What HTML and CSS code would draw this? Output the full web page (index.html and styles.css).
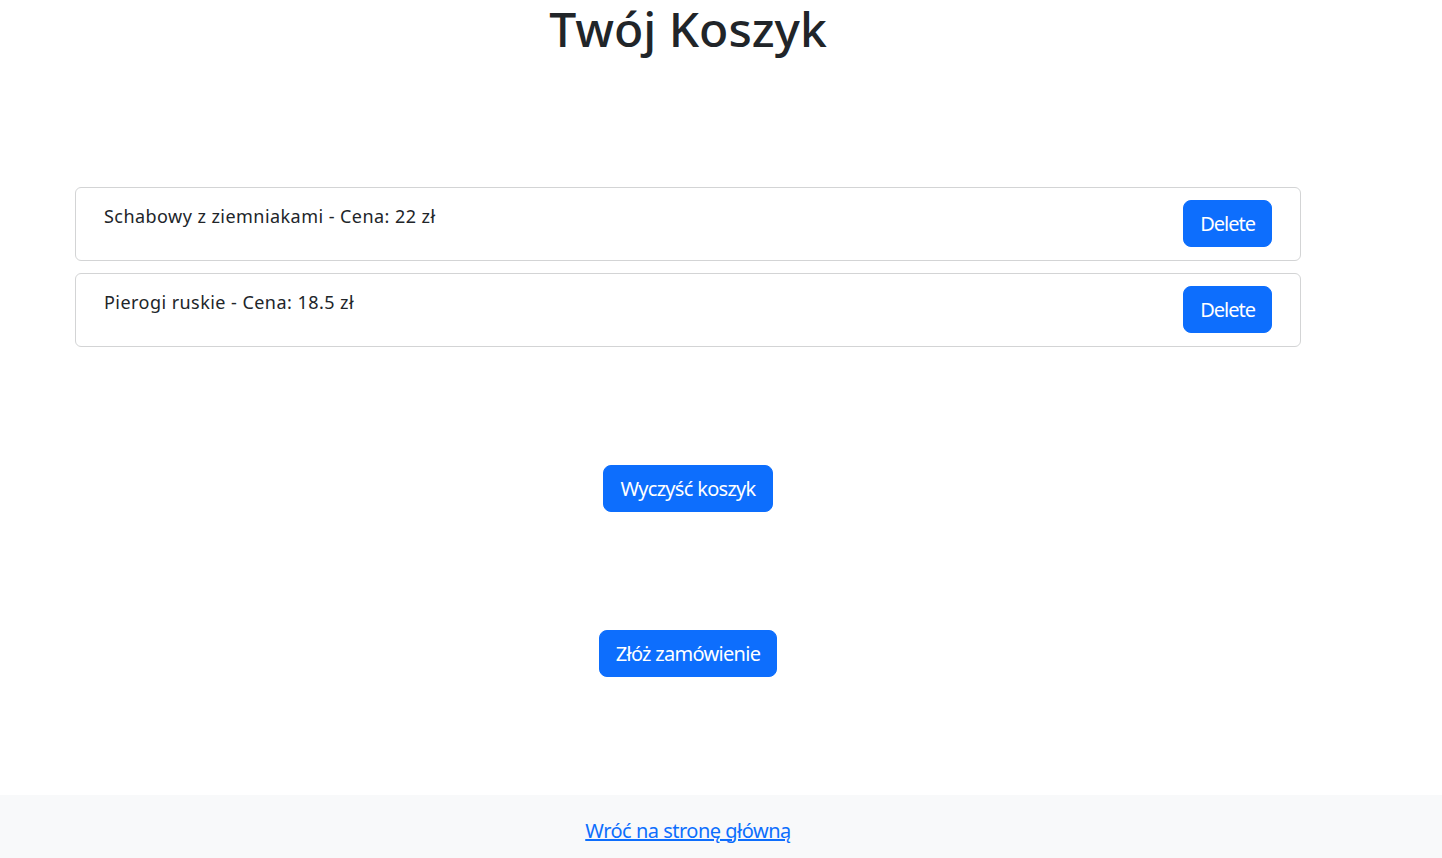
FILE: index.html
```html
<!DOCTYPE html>
<html lang="pl">
<head>
<meta charset="utf-8">
<title>Twój Koszyk</title>
<link rel="stylesheet" href="styles.css">
</head>
<body>
<main class="page">
  <h1 class="title">Twój Koszyk</h1>
  <ul class="cart-list">
    <li class="cart-item">
      <span class="item-text">Schabowy z ziemniakami - Cena: 22 zł</span>
      <button class="btn btn-lg btn-delete">Delete</button>
    </li>
    <li class="cart-item">
      <span class="item-text">Pierogi ruskie - Cena: 18.5 zł</span>
      <button class="btn btn-lg btn-delete">Delete</button>
    </li>
  </ul>
  <div class="actions">
    <button class="btn btn-lg">Wyczyść koszyk</button>
    <button class="btn btn-lg">Złóż zamówienie</button>
  </div>
</main>
<footer class="footer">
  <div class="footer-inner">
    <a href="#" class="home-link">Wróć na stronę główną</a>
  </div>
</footer>
</body>
</html>
```
FILE: styles.css
```css
* { box-sizing: border-box; }

body {
  margin: 0;
  font-family: "Noto Sans", "Open Sans", sans-serif;
  font-size: 16px;
  line-height: 1.5;
  color: #212529;
  background: #fff;
}

.page {
  width: 1376px;
  display: flex;
  flex-direction: column;
}

.title {
  margin: 0;
  font-size: 48px;
  font-weight: 500;
  line-height: 1.2;
  text-align: center;
}

.cart-list {
  list-style: none;
  margin: 129px 75px 0;
  padding: 0;
  display: flex;
  flex-direction: column;
  gap: 12px;
}

.cart-item {
  display: flex;
  justify-content: space-between;
  align-items: flex-start;
  padding: 12px 28px 13px;
  border: 1px solid #d3d4d5;
  border-radius: 6px;
}

.item-text {
  font-size: 18px;
  line-height: 27px;
  padding-top: 3px;
  letter-spacing: 0.45px;
}

.btn {
  font-family: inherit;
  color: #fff;
  background: #0d6efd;
  border: 1px solid #0d6efd;
  cursor: pointer;
}

.btn-lg {
  font-size: 20px;
  line-height: 29px;
  padding: 8px 16px;
  border-radius: 8px;
  letter-spacing: -0.7px;
}

.btn-delete {
  letter-spacing: -1px;
}

.actions {
  display: flex;
  flex-direction: column;
  align-items: center;
  gap: 118px;
  margin: 118px 0 118px;
}

.footer {
  background: #f8f9fa;
}

.footer-inner {
  width: 1376px;
  padding: 21px 0 13px;
  text-align: center;
}

.home-link {
  font-size: 20px;
  line-height: 30px;
  color: #0d6efd;
  text-decoration: underline;
  letter-spacing: -0.5px;
}
```
